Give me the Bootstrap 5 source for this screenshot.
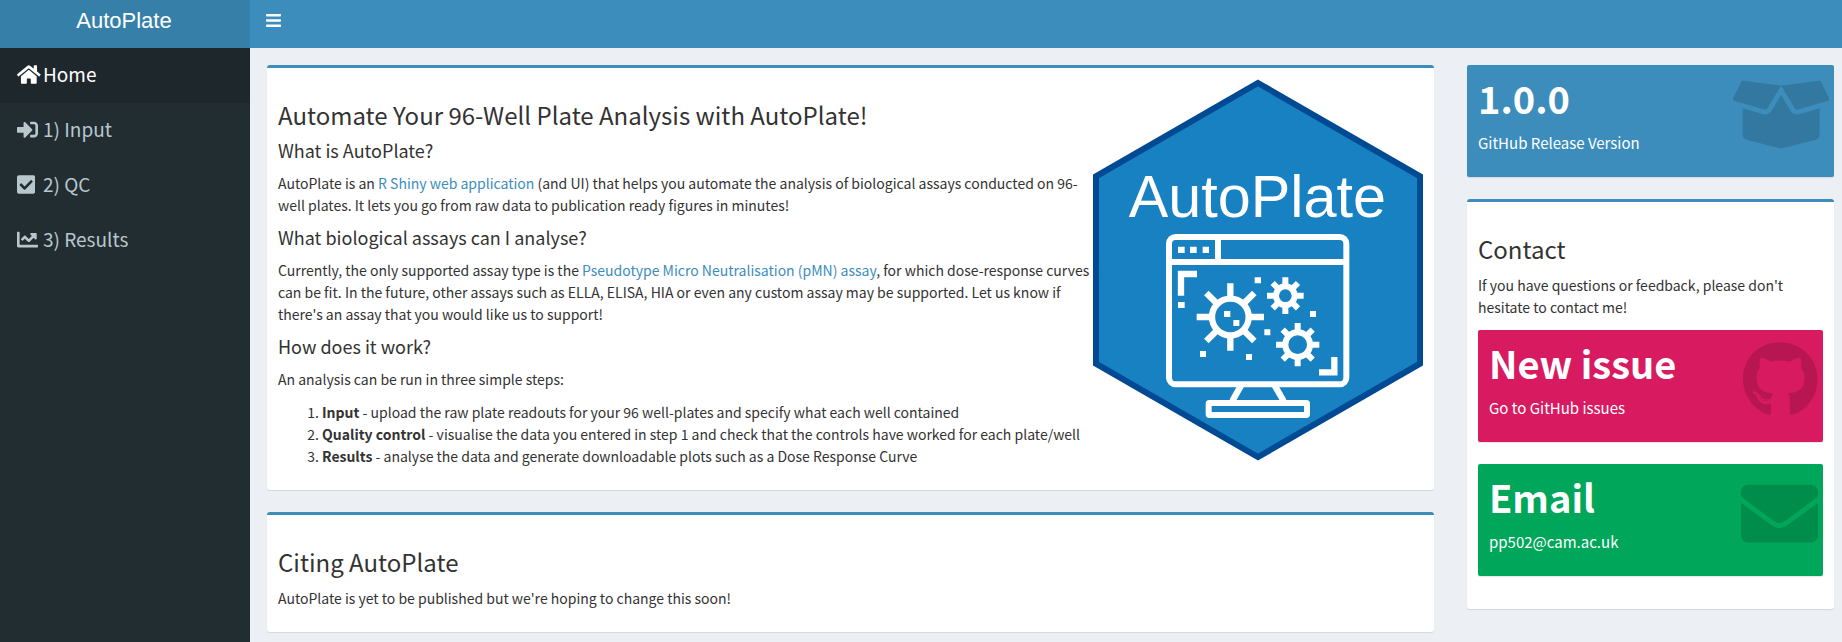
<!DOCTYPE html>
<html lang="en">
<head>
<meta charset="utf-8">
<meta name="viewport" content="width=device-width, initial-scale=1">
<title>AutoPlate</title>
<link href="https://cdn.jsdelivr.net/npm/bootstrap@5.3.0/dist/css/bootstrap.min.css" rel="stylesheet">
<style>
  body {
    font-family: "Source Sans Pro", "Noto Sans CJK SC", sans-serif;
    font-size: 14px; line-height: 22px; color: #333; background: #ecf0f5;
  }
  a { color: #3c8dbc; text-decoration: none; }
  svg { fill: currentColor; }

  .top-bar { background: #3c8dbc; height: 48px; }
  .side-width { width: 250px; flex: none; }
  .brand {
    background: #367fa9; color: #fff; padding: 0 2px 6px 0;
    font-family: "Liberation Sans", Arial, sans-serif; font-size: 22px;
  }
  .toggle { color: #fff; padding: 0 16px 8px; }

  .side-bar { background: #222d32; min-height: calc(100vh - 48px); }
  .side-bar .nav-link {
    display: flex; align-items: center; height: 55px; padding: 0 17px 3px;
    font-size: 19px; color: #b8c7ce;
  }
  .side-bar .nav-link.active { background: #1e282c; color: #fff; }
  .side-bar svg { height: 21px; }
  .icon-slot { width: 26px; flex: none; display: flex; }

  .content { padding: 17px 8px 0 17px; min-width: 0; overflow: hidden; }
  .content > .row { --bs-gutter-x: 33px; }

  .panel {
    background: #fff; border-top: 3px solid #3c8dbc; border-radius: 3px;
    padding: 11px; margin-bottom: 22px; box-shadow: 0 1px 1px rgba(0,0,0,.1);
  }
  .panel h2 { font-size: 24px; line-height: 29px; font-weight: 400; margin: 21px 0 10px; }
  .panel h3 { font-size: 18px; line-height: 22px; font-weight: 400; margin: 10px 0 11px; }
  .panel p { margin-bottom: 10px; }
  .panel h2 + p { margin-top: 11px; margin-bottom: 12px; }
  .panel ol { padding-left: 44px; margin: 11px 0 12px; }
  .hex { width: 330px; max-width: 100%; flex: none; }

  .tile {
    display: block; position: relative; overflow: hidden; color: #fff;
    border-radius: 2px; padding: 11px 11px 23px; margin-bottom: 22px;
    box-shadow: 0 1px 1px rgba(0,0,0,.1);
  }
  .tile strong { display: block; font-size: 38px; line-height: 44px; margin-bottom: 12px; }
  .tile span { display: block; font-size: 15px; }
  .tile svg { position: absolute; top: 11px; right: 5px; height: 77px; color: rgba(0,0,0,.15); }
  .tile-blue { background: #3c8dbc; }
  .tile-pink { background: #d81b60; }
  .tile-green { background: #00a65a; }
</style>
</head>
<body>
<header class="top-bar d-flex">
  <a href="#" class="brand side-width d-flex align-items-center justify-content-center">AutoPlate</a>
  <button type="button" class="toggle btn rounded-0 border-0 d-flex align-items-center" aria-label="Toggle navigation">
    <svg width="15" height="17" viewBox="0 0 448 512"><path d="M16 132h416c8.8 0 16-7.2 16-16V76c0-8.800-7.200-16-16-16H16C7.200 60 0 67.200 0 76v40c0 8.800 7.200 16 16 16zm0 160h416c8.800 0 16-7.200 16-16v-40c0-8.800-7.200-16-16-16H16c-8.800 0-16 7.200-16 16v40c0 8.800 7.200 16 16 16zm0 160h416c8.800 0 16-7.200 16-16v-40c0-8.800-7.200-16-16-16H16c-8.800 0-16 7.200-16 16v40c0 8.800 7.200 16 16 16z"/></svg>
  </button>
</header>

<div class="d-flex">
  <nav class="side-bar side-width nav flex-column flex-nowrap">
    <a class="nav-link active" href="#" aria-current="page"><span class="icon-slot"><svg viewBox="0 0 576 512"><path d="M280.37 148.26L96 300.11V464a16 16 0 0 0 16 16l112.06-.29a16 16 0 0 0 15.92-16V368a16 16 0 0 1 16-16h64a16 16 0 0 1 16 16v95.64a16 16 0 0 0 16 16.05L464 480a16 16 0 0 0 16-16V300L295.67 148.26a12.19 12.19 0 0 0-15.3 0zM571.6 251.47L488 182.56V44.05a12 12 0 0 0-12-12h-56a12 12 0 0 0-12 12v72.61L318.47 43a48 48 0 0 0-61 0L4.34 251.47a12 12 0 0 0-1.6 16.9l25.5 31A12 12 0 0 0 45.15 301l235.22-193.74a12.19 12.19 0 0 1 15.3 0L530.9 301a12 12 0 0 0 16.9-1.6l25.5-31a12 12 0 0 0-1.7-16.93z"/></svg></span>Home</a>
    <a class="nav-link" href="#"><span class="icon-slot"><svg viewBox="0 0 512 512"><path d="M416 448h-84c-6.600 0-12-5.400-12-12v-40c0-6.600 5.400-12 12-12h84c17.700 0 32-14.300 32-32V160c0-17.700-14.300-32-32-32h-84c-6.600 0-12-5.400-12-12V76c0-6.600 5.400-12 12-12h84c53 0 96 43 96 96v192c0 53-43 96-96 96zm-47-201L201 79c-15-15-41-4.500-41 17v96H24c-13.300 0-24 10.700-24 24v96c0 13.300 10.700 24 24 24h136v96c0 21.500 26 32 41 17l168-168c9.300-9.400 9.300-24.600 0-34z"/></svg></span>1) Input</a>
    <a class="nav-link" href="#"><span class="icon-slot"><svg viewBox="0 0 448 512"><path d="M400 480H48c-26.51 0-48-21.49-48-48V80c0-26.51 21.49-48 48-48h352c26.51 0 48 21.49 48 48v352c0 26.51-21.49 48-48 48zm-204.686-98.059l184-184c6.248-6.248 6.248-16.379 0-22.627l-22.627-22.627c-6.248-6.248-16.379-6.249-22.628 0L184 302.745l-70.059-70.059c-6.248-6.248-16.379-6.248-22.628 0l-22.627 22.627c-6.248 6.248-6.248 16.379 0 22.627l104 104c6.249 6.25 16.379 6.25 22.628.001z"/></svg></span>2) QC</a>
    <a class="nav-link" href="#"><span class="icon-slot"><svg viewBox="0 0 512 512"><path d="M496 384H64V80c0-8.840-7.160-16-16-16H16C7.160 64 0 71.160 0 80v336c0 17.670 14.330 32 32 32h464c8.840 0 16-7.160 16-16v-32c0-8.840-7.160-16-16-16zM464 96H345.940c-21.380 0-32.090 25.850-16.970 40.970l32.400 32.400L288 242.750l-73.370-73.370c-12.500-12.500-32.760-12.500-45.250 0l-68.690 68.690c-6.250 6.250-6.250 16.380 0 22.630l22.620 22.620c6.250 6.250 16.380 6.250 22.630 0L192 237.250l73.370 73.370c12.500 12.500 32.760 12.500 45.250 0l96-96 32.400 32.400c15.120 15.120 40.970 4.410 40.970-16.970V112c.01-8.840-7.150-16-15.990-16z"/></svg></span>3) Results</a>
  </nav>

  <main class="content flex-grow-1">
    <div class="row">
      <div class="col-9">
        <section class="panel d-flex justify-content-between">
          <div class="flex-grow-1">
            <h2>Automate Your 96-Well Plate Analysis with AutoPlate!</h2>
            <h3>What is AutoPlate?</h3>
            <p>AutoPlate is an <a href="#">R Shiny web application</a> (and UI) that helps you automate the analysis of biological assays conducted on 96-well plates. It lets you go from raw data to publication ready figures in minutes!</p>
            <h3>What biological assays can I analyse?</h3>
            <p>Currently, the only supported assay type is the <a href="#">Pseudotype Micro Neutralisation (pMN) assay</a>, for which dose-response curves can be fit. In the future, other assays such as ELLA, ELISA, HIA or even any custom assay may be supported. Let us know if there's an assay that you would like us to support!</p>
            <h3>How does it work?</h3>
            <p>An analysis can be run in three simple steps:</p>
            <ol>
              <li><b>Input</b> - upload the raw plate readouts for your 96 well-plates and specify what each well contained</li>
              <li><b>Quality control</b> - visualise the data you entered in step 1 and check that the controls have worked for each plate/well</li>
              <li><b>Results</b> - analyse the data and generate downloadable plots such as a Dose Response Curve</li>
            </ol>
          </div>
          <div class="hex">
            <svg class="d-block w-100" viewBox="0 0 990 1146" role="img" aria-label="AutoPlate logo">
              <path d="M495 12 981 292V854L495 1134 9 854V292z" fill="#1881c2" stroke="#004a94" stroke-width="18"/>
              <text x="493" y="415" text-anchor="middle" font-family="Liberation Sans, Arial, sans-serif" font-size="178" fill="#fff">AutoPlate</text>
              <g fill="none" stroke="#fff" stroke-width="18">
                <rect x="228" y="474" width="532" height="442" rx="20"/>
                <path d="M228 549H760M375 474V549"/>
                <path d="M264 650V585H312M724 834V880H678" stroke-width="19"/>
                <path d="M446 916 418 966M543 916 572 966" stroke-width="19"/>
                <rect x="347" y="972" width="295" height="36" rx="2"/>
                <g stroke-width="19">
                  <circle cx="412" cy="714" r="55"/>
                  <path d="M412 613V656M412 772V815M311 714H354M470 714H513M340 642 371 673M453 755 484 786M340 786 371 755M453 673 484 642"/>
                </g>
                <circle cx="577" cy="650" r="28"/>
                <path d="M577 595V620M577 680V705M522 650H547M607 650H632M539 612 556 629M598 671 615 688M539 688 556 671M598 629 615 612"/>
                <circle cx="614" cy="797" r="37"/>
                <path d="M614 732V759M614 835V862M549 797H576M652 797H679M569 752 587 770M641 824 659 842M569 842 587 824M641 770 659 752"/>
              </g>
              <path fill="#fff" d="M255 503h20v19h-20zM291 503h20v19h-20zM329 503h19v19h-19zM255 669h20v18h-20zM393 696h19v18h-19zM421 723h18v18h-18zM485 595h19v18h-19zM651 696h18v18h-18zM514 751h18v18h-18zM321 816h18v18h-18zM459 825h18v18h-18z"/>
            </svg>
          </div>
        </section>
        <section class="panel">
          <h2>Citing AutoPlate</h2>
          <p>AutoPlate is yet to be published but we're hoping to change this soon!</p>
        </section>
      </div>

      <div class="col-3">
        <div class="tile tile-blue">
          <strong>1.0.0</strong><span>GitHub Release Version</span>
          <svg viewBox="0 0 640 512"><path d="M425.7 256c-16.900 0-32.800-9-41.400-23.400L320 126l-64.200 106.600c-8.700 14.500-24.600 23.500-41.500 23.500-4.500 0-9-.6-13.300-1.900L64 215v178c0 14.700 10 27.500 24.200 31l216.200 54.100c10.200 2.500 20.900 2.500 31 0L551.800 424c14.200-3.600 24.200-16.400 24.200-31V215l-137 39.100c-4.300 1.300-8.800 1.900-13.300 1.900zm212.600-112.200L586.800 41c-3.100-6.200-9.800-9.800-16.700-8.900L320 64l91.700 152.100c3.800 6.300 11.400 9.300 18.500 7.300l197.900-56.500c9.900-2.900 14.700-13.900 10.200-23.100zM53.200 41L1.700 143.800c-4.600 9.200.3 20.200 10.100 23l197.900 56.500c7.100 2 14.700-1 18.500-7.300L320 64 69.800 32.100c-6.900-.8-13.500 2.700-16.600 8.900z"/></svg>
        </div>
        <section class="panel">
          <h2>Contact</h2>
          <p>If you have questions or feedback, please don't hesitate to contact me!</p>
          <a class="tile tile-pink" href="#">
            <strong>New issue</strong><span>Go to GitHub issues</span>
            <svg viewBox="0 0 496 512"><path d="M165.900 397.400c0 2-2.300 3.600-5.200 3.600-3.300.3-5.600-1.300-5.600-3.600 0-2 2.300-3.600 5.200-3.600 3-.3 5.600 1.300 5.600 3.600zm-31.100-4.500c-.7 2 1.300 4.300 4.300 4.900 2.600 1 5.600 0 6.200-2s-1.300-4.300-4.300-5.200c-2.600-.7-5.500.3-6.200 2.300zm44.200-1.700c-2.900.7-4.900 2.600-4.600 4.900.3 2 2.900 3.300 5.900 2.600 2.900-.7 4.900-2.600 4.600-4.600-.3-1.900-3-3.200-5.900-2.900zM244.800 8C106.100 8 0 113.300 0 252c0 110.900 69.800 205.800 169.500 239.200 12.800 2.300 17.300-5.600 17.300-12.100 0-6.200-.3-40.400-.3-61.400 0 0-70 15-84.700-29.800 0 0-11.400-29.100-27.800-36.600 0 0-22.900-15.700 1.600-15.400 0 0 24.900 2 38.600 25.800 21.900 38.600 58.600 27.500 72.900 20.900 2.300-16 8.800-27.100 16-33.700-55.900-6.200-112.300-14.300-112.300-110.500 0-27.500 7.600-41.300 23.600-58.900-2.600-6.500-11.100-33.300 2.600-67.900 20.900-6.500 69 27 69 27 20-5.600 41.500-8.500 62.800-8.500s42.800 2.900 62.800 8.500c0 0 48.100-33.600 69-27 13.700 34.700 5.200 61.400 2.600 67.900 16 17.700 25.800 31.500 25.800 58.900 0 96.500-58.900 104.200-114.800 110.500 9.200 7.900 17 22.900 17 46.400 0 33.700-.3 75.400-.3 83.600 0 6.500 4.600 14.400 17.300 12.100C428.200 457.800 496 362.900 496 252 496 113.300 383.500 8 244.800 8zM97.200 352.900c-1.300 1-1 3.300.7 5.200 1.600 1.600 3.900 2.300 5.200 1 1.300-1 1-3.300-.7-5.200-1.600-1.600-3.900-2.300-5.200-1zm-10.800-8.100c-.7 1.300.3 2.900 2.300 3.900 1.600 1 3.600.7 4.300-.7.7-1.300-.3-2.900-2.300-3.900-2-.6-3.600-.3-4.300.7zm32.400 35.600c-1.600 1.300-1 4.300 1.300 6.200 2.300 2.300 5.200 2.600 6.500 1 1.300-1.300.7-4.300-1.300-6.200-2.200-2.300-5.200-2.600-6.500-1zm-11.400-14.700c-1.600 1-1.600 3.600 0 5.900 1.600 2.300 4.300 3.300 5.600 2.300 1.600-1.300 1.600-3.900 0-6.200-1.400-2.300-4-3.300-5.600-2z"/></svg>
          </a>
          <a class="tile tile-green" href="#">
            <strong>Email</strong><span>pp502@cam.ac.uk</span>
            <svg viewBox="0 0 512 512"><path d="M502.300 190.800c3.900-3.100 9.700-.2 9.700 4.700V400c0 26.500-21.500 48-48 48H48c-26.500 0-48-21.500-48-48V195.600c0-5 5.700-7.800 9.700-4.700 22.400 17.400 52.100 39.500 154.100 113.600 21.100 15.400 56.700 47.800 92.200 47.600 35.700.3 72-32.800 92.300-47.600 102-74.100 131.600-96.300 154-113.700zM256 320c23.200.4 56.600-29.200 73.400-41.400 132.700-96.300 142.800-104.700 173.400-128.700 5.800-4.500 9.200-11.500 9.200-18.900v-19c0-26.500-21.500-48-48-48H48c-26.500 0-48 21.500-48 48v19c0 7.400 3.400 14.300 9.200 18.900 30.600 23.900 40.700 32.400 173.400 128.700 16.800 12.200 50.200 41.800 73.400 41.400z"/></svg>
          </a>
        </section>
      </div>
    </div>
  </main>
</div>
<script src="https://cdn.jsdelivr.net/npm/bootstrap@5.3.0/dist/js/bootstrap.bundle.min.js"></script>
</body>
</html>
